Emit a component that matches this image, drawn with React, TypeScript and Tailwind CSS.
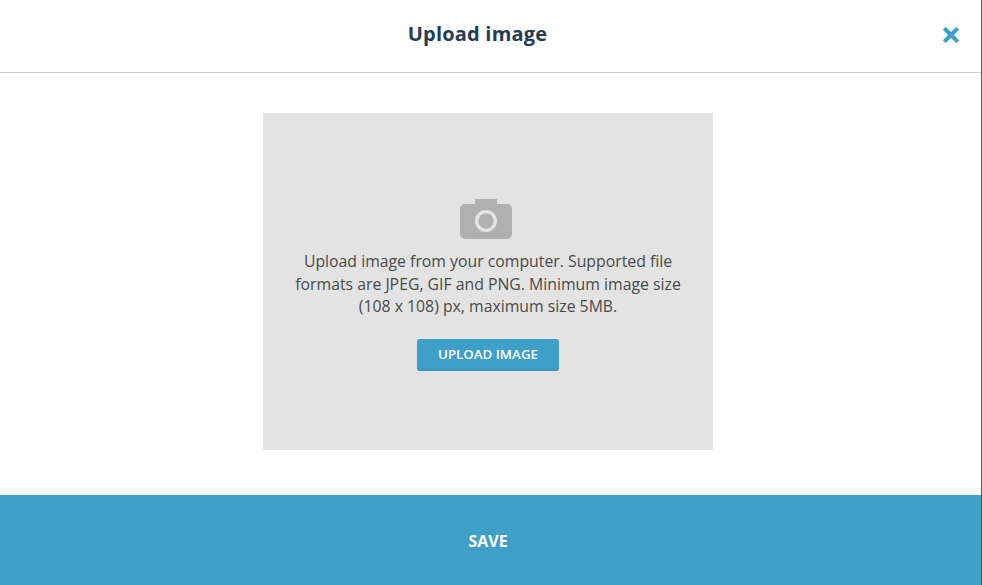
export default function App() {
  return (
    <div className="flex h-[585px] w-[982px] overflow-hidden bg-white font-['Open_Sans',sans-serif]">
      <div className="flex w-[981px] flex-col">
        <header className="flex h-[73px] shrink-0 items-center border-b border-[#cccccc] pl-[20px] pr-[22px]">
          <h1 className="flex-1 pb-[4px] pr-[8px] text-center text-[20px] font-bold leading-[28px] tracking-[0.2px] text-[#243b53]">
            Upload image
          </h1>
          <button className="pb-[2px] text-[#3ea0c8]">
            <svg width="16" height="16" viewBox="0 0 16 16" fill="currentColor">
              <path d="M5.1 8 .4 3.3a1 1 0 0 1 0-1.4L1.9.4a1 1 0 0 1 1.4 0L8 5.1 12.7.4a1 1 0 0 1 1.4 0l1.5 1.5a1 1 0 0 1 0 1.4L10.9 8l4.7 4.7a1 1 0 0 1 0 1.4l-1.5 1.5a1 1 0 0 1-1.4 0L8 10.9l-4.7 4.7a1 1 0 0 1-1.4 0L.4 14.1a1 1 0 0 1 0-1.4z" />
            </svg>
          </button>
        </header>
        <main className="flex flex-1 justify-center pt-[40px]">
          <div className="ml-[-5px] flex h-[337px] w-[450px] flex-col items-center bg-[#e3e3e3] px-[30px] pt-[86px]">
            <svg className="mr-[4px]" width="52" height="40" viewBox="0 0 52 40" fill="#b0b0b0">
              <path
                fillRule="evenodd"
                d="M15 0h22v5h10a5 5 0 0 1 5 5v25a5 5 0 0 1-5 5H5a5 5 0 0 1-5-5V10a5 5 0 0 1 5-5h10zM26 11a11 11 0 1 0 0 22 11 11 0 0 0 0-22zm0 3.5a7.5 7.5 0 1 1 0 15 7.5 7.5 0 0 1 0-15z"
              />
              <circle cx="26" cy="22" r="7.5" />
            </svg>
            <p className="mx-[-5px] mt-[11px] text-center text-[15.8px] leading-[22.5px] text-[#4a4a4a]">
              Upload image from your computer. Supported file formats are JPEG, GIF and PNG. Minimum image size (108 x 108) px, maximum size 5MB.
            </p>
            <button className="mt-[21px] h-[32px] w-[142px] rounded-[3px] border-b-2 border-[#3594bb] bg-[#3ea0c8] pt-[3px] text-[13.3px] font-semibold text-white">
              UPLOAD IMAGE
            </button>
          </div>
        </main>
        <footer className="flex h-[90px] shrink-0 items-center justify-center bg-[#3ea0c8] pt-[2px] text-[16px] font-bold text-white">
          <span className="ml-[-5px]">SAVE</span>
        </footer>
      </div>
      <div className="w-px bg-[#555555]" />
    </div>
  );
}
